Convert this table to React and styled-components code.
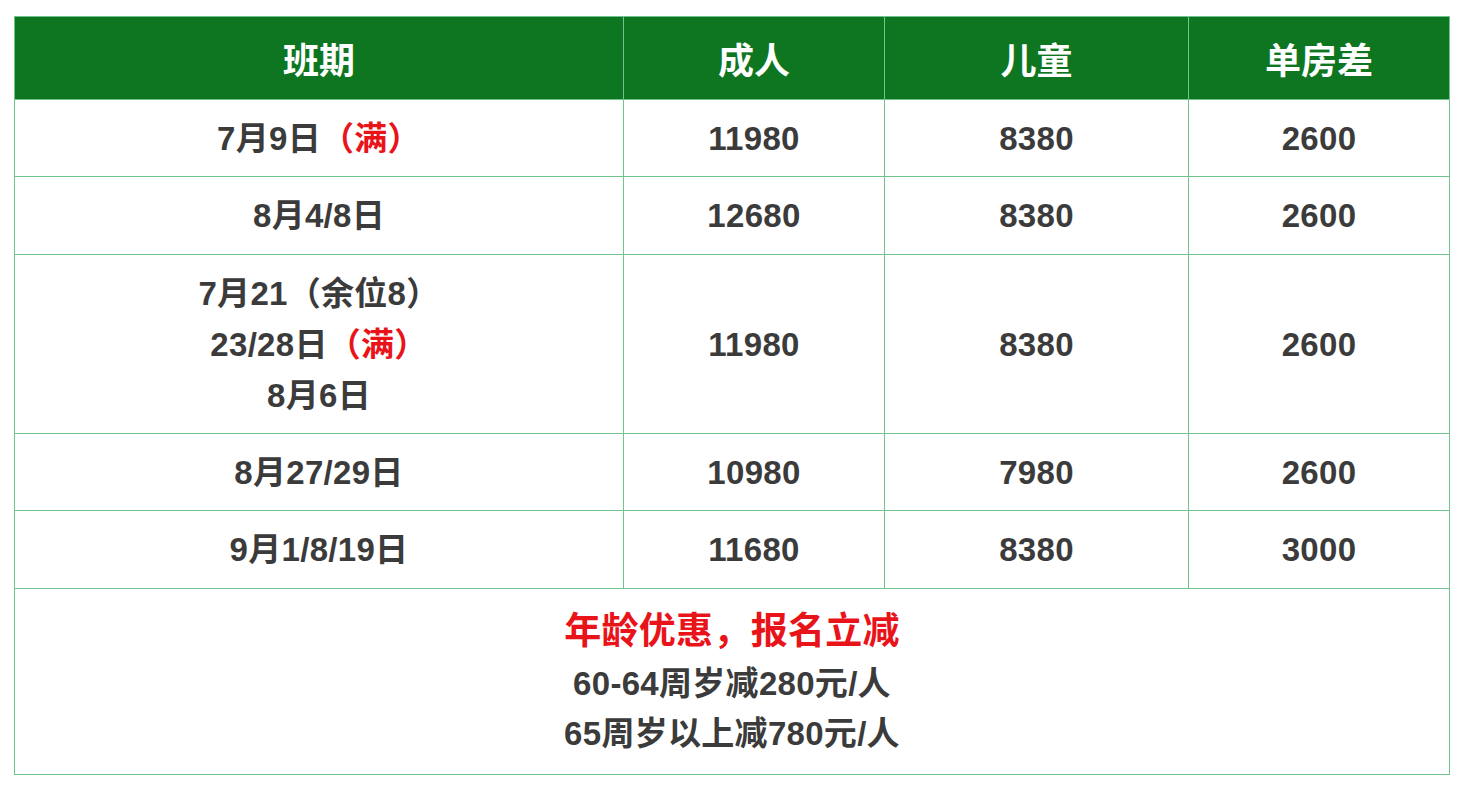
import React from "react";
import styled, { createGlobalStyle } from "styled-components";

const GlobalStyle = createGlobalStyle`
  html, body {
    margin: 0;
    padding: 0;
    background: #ffffff;
  }
  body {
    font-family: "Liberation Sans", "Noto Sans CJK SC", sans-serif;
  }
`;

const Page = styled.div`
  padding: 16px 8px 0 14px;
`;

const Table = styled.table`
  width: 1436px;
  border-collapse: collapse;
  table-layout: fixed;
`;

const HeadCell = styled.th`
  height: 82px;
  background: #0e7621;
  color: #ffffff;
  font-size: 36px;
  font-weight: 700;
  text-align: center;
  border: 1px solid #72c28d;
  padding: 0;
`;

const Row = styled.tr`
  height: ${(props) => props.h + "px"};
`;

const Cell = styled.td`
  color: #3b3b3b;
  font-size: 33px;
  font-weight: 700;
  letter-spacing: 0.3px;
  text-align: center;
  vertical-align: middle;
  border: 1px solid #72c28d;
  padding: 0;
  line-height: 51px;
`;

const Full = styled.span`
  color: #e8141a;
`;

const PromoTitle = styled.div`
  color: #e8141a;
  font-size: 37px;
  font-weight: 700;
  line-height: 54px;
`;

const PromoLine = styled.div`
  color: #3b3b3b;
  font-size: 33px;
  font-weight: 700;
  line-height: 50px;
`;

const rows = [
  { h: 77, date: ["7月9日", <Full key="f">（满）</Full>], adult: "11980", child: "8380", single: "2600" },
  { h: 78, date: ["8月4/8日"], adult: "12680", child: "8380", single: "2600" },
  {
    h: 179,
    date: [
      <div key="a">7月21（余位8）</div>,
      <div key="b">
        23/28日<Full>（满）</Full>
      </div>,
      <div key="c">8月6日</div>,
    ],
    adult: "11980",
    child: "8380",
    single: "2600",
  },
  { h: 77, date: ["8月27/29日"], adult: "10980", child: "7980", single: "2600" },
  { h: 78, date: ["9月1/8/19日"], adult: "11680", child: "8380", single: "3000" },
];

export default function App() {
  return (
    <>
      <GlobalStyle />
      <Page>
        <Table>
          <colgroup>
            <col style={{ width: 609 }} />
            <col style={{ width: 261 }} />
            <col style={{ width: 304 }} />
            <col style={{ width: 261 }} />
          </colgroup>
          <thead>
            <tr>
              <HeadCell>班期</HeadCell>
              <HeadCell>成人</HeadCell>
              <HeadCell>儿童</HeadCell>
              <HeadCell>单房差</HeadCell>
            </tr>
          </thead>
          <tbody>
            {rows.map((r, i) => (
              <Row key={i} h={r.h}>
                <Cell>{r.date}</Cell>
                <Cell>{r.adult}</Cell>
                <Cell>{r.child}</Cell>
                <Cell>{r.single}</Cell>
              </Row>
            ))}
            <Row h={186}>
              <Cell colSpan={4}>
                <PromoTitle>年龄优惠，报名立减</PromoTitle>
                <PromoLine>60-64周岁减280元/人</PromoLine>
                <PromoLine>65周岁以上减780元/人</PromoLine>
              </Cell>
            </Row>
          </tbody>
        </Table>
      </Page>
    </>
  );
}
